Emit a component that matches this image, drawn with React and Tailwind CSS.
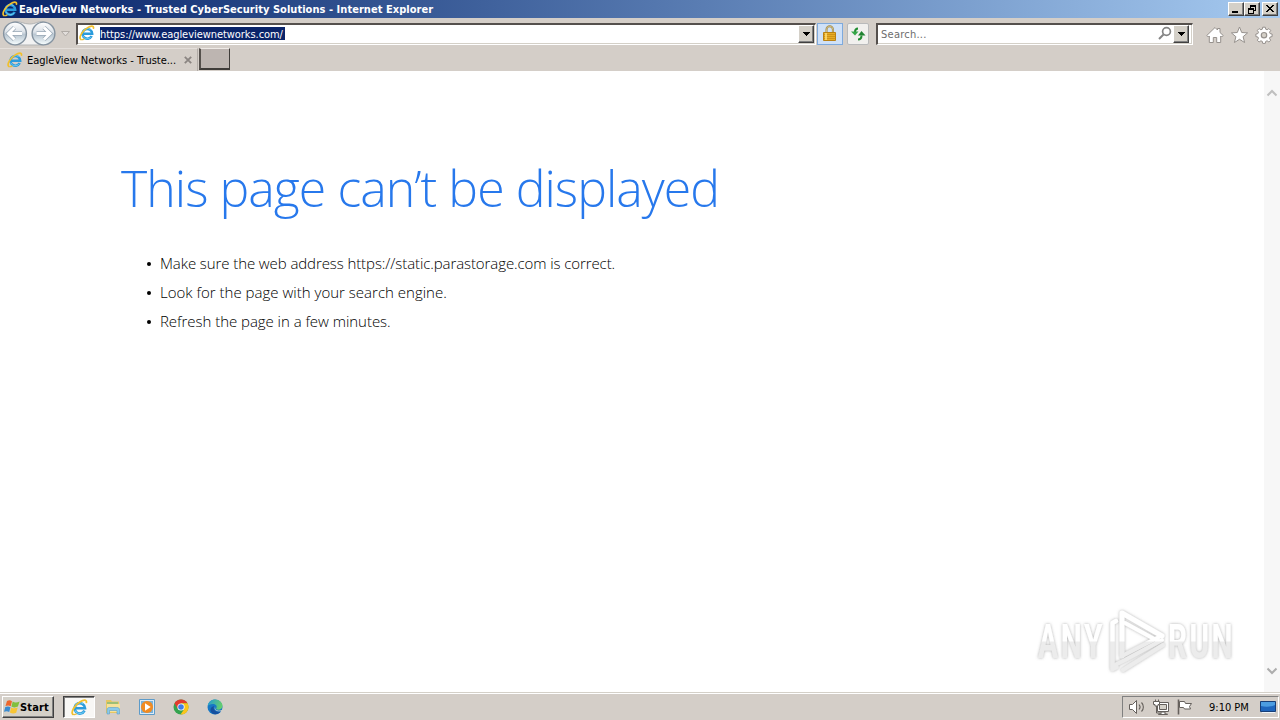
import { useState } from 'react';

// ─── Shared classes ───────────────────────────────────────────────────────────
const TAHOMA = "font-['DejaVu_Sans_Condensed','DejaVu_Sans',sans-serif] [font-stretch:condensed]";
const RAISED = 'border border-t-white border-l-white border-r-[#404040] border-b-[#404040] shadow-[inset_-1px_-1px_0_#808080]';

// ─── Browser logo ─────────────────────────────────────────────────────────────
function IeLogo({ className = '' }) {
    return (
        <svg viewBox="0 0 16 16" className={`shrink-0 ${className}`} fill="none">
            <path d="M12.700 11A4.900 4.900 0 1 1 13.200 8.700H4.500" stroke="#2a9bdc" strokeWidth="2.500" />
            <path d="M12.300 11.800A5 5 0 0 1 3.800 10.800M4.200 6.200A5 5 0 0 1 11.500 4.500" stroke="#6fcdf3" strokeWidth="1" />
            <path d="M1.600 14.300C-.2 12 3.300 6 8.300 2.900 11.800.6 14.800.400 14.500 3.200" stroke="#f2c02c" strokeWidth="1.700" strokeLinecap="round" />
            <path d="M1.800 14.400c.8.600 2.300.2 3.600-.5" stroke="#e8bd3a" strokeWidth="1.200" />
        </svg>
    );
}

// ─── Title bar ────────────────────────────────────────────────────────────────
function CaptionButton({ children, className = '' }) {
    return (
        <button className={`flex h-[14px] w-4 items-center justify-center bg-[#d4d0c8] ${RAISED} ${className}`}>
            <svg viewBox="0 0 12 10" className="h-[10px] w-3" shapeRendering="crispEdges" fill="none" stroke="#000">
                {children}
            </svg>
        </button>
    );
}

function TitleBar() {
    return (
        <div className="flex h-[18px] items-center bg-linear-to-r from-[#0a246a] to-[#a6caf0] pr-[2px] pl-[2px]">
            <IeLogo className="h-4 w-4" />
            <span className={`${TAHOMA} ml-px pt-px text-[11px] leading-[17px] font-bold whitespace-nowrap text-white tracking-[0.04px]`}>
                EagleView Networks - Trusted CyberSecurity Solutions - Internet Explorer
            </span>
            <div className="ml-auto flex">
                <CaptionButton>
                    <path d="M2 8h6" strokeWidth="2" />
                </CaptionButton>
                <CaptionButton className="mr-[2px]">
                    <path d="M4 1h6M4 2h6M4.5 1v3M9.5 1v6M8 6.5h2M2 4h6M2 5h6M2.5 4v6M7.5 4v6M2 9.5h6" />
                </CaptionButton>
                <CaptionButton>
                    <path d="M2 1l7 7M3 1l7 7M9 1L2 8M10 1L3 8" shapeRendering="auto" />
                </CaptionButton>
            </div>
        </div>
    );
}

// ─── Navigation ───────────────────────────────────────────────────────────────
function NavArrows() {
    return (
        <svg viewBox="0 0 72 26" className="h-[26px] w-[72px] shrink-0">
            <defs>
                <linearGradient id="orb" x1="0" y1="0" x2="0" y2="1">
                    <stop offset="0" stopColor="#fff" />
                    <stop offset=".42" stopColor="#dde3e9" />
                    <stop offset=".55" stopColor="#b9c6d1" />
                    <stop offset="1" stopColor="#f8ffff" />
                </linearGradient>
            </defs>
            <path d="M15 1.500C21 1 23 4 29.500 4S38 1 43 1.500a12 12 0 0 1 0 23.500H15A12 12 0 0 1 15 1.500z" fill="#f2f2f2" stroke="#b3b5b6" />
            <circle cx="15" cy="13.500" r="11.400" fill="url(#orb)" stroke="#8593a0" strokeWidth="1.400" />
            <circle cx="43.500" cy="13.500" r="11.400" fill="url(#orb)" stroke="#8593a0" strokeWidth="1.400" />
            <g fill="none" strokeLinejoin="miter">
                <path d="M22 13.500H9M14.500 7.500L8.500 13.500L14.500 19.500" stroke="#9aa9b6" strokeWidth="4.400" />
                <path d="M22 13.500H9M14.500 7.500L8.500 13.500L14.500 19.500" stroke="#fff" strokeWidth="3" />
                <path d="M36.500 13.500H50M44 7.500L50 13.500L44 19.500" stroke="#9aa9b6" strokeWidth="4.400" />
                <path d="M36.500 13.500H50M44 7.500L50 13.500L44 19.500" stroke="#fff" strokeWidth="3" />
            </g>
            <path d="M61.500 11.500h8l-4 4.500z" fill="#e2dedb" stroke="#b0aba6" />
        </svg>
    );
}

function DropButton() {
    return (
        <button className={`flex w-4 shrink-0 items-center justify-center bg-[#d4d0c8] ${RAISED}`}>
            <svg viewBox="0 0 7 4" className="h-1 w-[7px]" shapeRendering="crispEdges">
                <path d="M0 0h7v1H0zM1 1h5v1H1zM2 2h3v1H2zM3 3h1v1H3z" />
            </svg>
        </button>
    );
}

const FIELD = 'flex h-[22px] border-t-2 border-l-2 border-r border-b border-t-[#55504d] border-l-[#55504d] border-r-white border-b-white bg-white shadow-[inset_-1px_-1px_0_#d4d0c8]';

function AddressBar() {
    return (
        <div className={`${FIELD} ml-1 w-[740px] pr-[1px] pb-[1px]`}>
            <IeLogo className="ml-[1px] h-4 w-4" />
            <span className={`${TAHOMA} mt-[2px] ml-[5px] h-[13px] w-[185px] shrink-0 bg-[#0a246a] text-[11px] leading-[15px] whitespace-nowrap text-white tracking-[-0.06px]`}>
                https://www.eagleviewnetworks.com/
            </span>
            <div className="grow" />
            <DropButton />
        </div>
    );
}

function SecurityButtons() {
    return (
        <>
            <button className="ml-px flex h-[22px] w-[26px] items-center justify-center border border-[#7eaadd] bg-[#cfe1f8]">
                <svg viewBox="0 0 16 18" className="h-[18px] w-4">
                    <path d="M4.500 8V4.500a3.200 3.200 0 0 1 6.400 0V8" fill="none" stroke="#9c8648" strokeWidth="2" />
                    <path d="M4.500 8V4.500a3.200 3.200 0 0 1 6.400 0V8" fill="none" stroke="#e5d49b" strokeWidth=".7" />
                    <path d="M1.500 7.500h12v8h-12z" fill="#e9ad25" stroke="#b98114" />
                    <path d="M2 9.500h11M2 11.500h11M2 13.500h11" stroke="#cb9018" strokeWidth=".9" />
                    <path d="M4 8v7" stroke="#ffe27c" strokeWidth="1.500" />
                </svg>
            </button>
            <button className="ml-1 flex h-[22px] w-[22px] items-center justify-center rounded-[2px] border border-[#b9babb] bg-[#f1f0ee]">
                <svg viewBox="0 0 16 14" className="-mt-px h-[14px] w-4" fill="none" stroke="#218d31" strokeWidth="2">
                    <path d="M8 1.500C6 1.500 5 3 5 5" />
                    <path d="M1 4.500h7.500L5 8.500z" fill="#34a647" stroke="none" />
                    <path d="M8 12.500c2.500 0 3.500-1.500 3.500-4" />
                    <path d="M8 8.500h7.500L11.500 4z" fill="#208332" stroke="none" />
                </svg>
            </button>
        </>
    );
}

function SearchBox() {
    return (
        <div className={`${FIELD} ml-[7px] w-[317px] pr-[3px] pb-[1px]`}>
            <span className={`${TAHOMA} ml-[3px] text-[11px] leading-[19px] text-[#6d6d6d] tracking-[0.25px]`}>Search...</span>
            <svg viewBox="0 0 14 14" className="mt-[1px] mr-px ml-auto h-[14px] w-[14px]" fill="none" stroke="#858585">
                <circle cx="8.500" cy="5.500" r="3.900" strokeWidth="1.700" />
                <path d="M5.500 8.500L1 13" strokeWidth="2" />
            </svg>
            <DropButton />
        </div>
    );
}

function CommandIcons() {
    return (
        <svg viewBox="0 0 68 18" className="ml-[13px] h-[18px] w-[68px] shrink-0" fill="#fff" stroke="#96918d" strokeLinejoin="round">
            <path d="M.8 9.500L9 1.500l2.500 2.500V2.500h2.500v4L17.200 9.500l-1.500 1.500-1-1v6.500h-4v-5h-3.400v5h-4V10l-1 1z" />
            <path d="M33.500 1l2.200 5.500 5.900.4-4.500 3.800 1.500 5.800-5.100-3.200-5.100 3.200 1.500-5.800-4.500-3.800 5.900-.4z" />
            <path d="M56.700 1.200h2.600l.4 2 1.400.6 1.800-1.200 1.800 1.800-1.200 1.800.6 1.400 2 .4v2.600l-2 .4-.6 1.400 1.200 1.800-1.800 1.800-1.800-1.200-1.400.6-.4 2h-2.600l-.4-2-1.400-.6-1.800 1.200-1.800-1.800 1.200-1.800-.6-1.400-2-.4V8l2-.4.6-1.400-1.200-1.800 1.800-1.800 1.800 1.200 1.400-.6z" />
            <circle cx="58" cy="9.200" r="2.700" fill="#d4d0c8" strokeWidth="1.200" />
        </svg>
    );
}

function Tab({ title }) {
    return (
        <div className="flex h-[23px] w-[198px] items-center border-t border-r border-t-[#e4dfdb] border-r-[#b2aca7] pl-[7px]">
            <IeLogo className="h-4 w-4" />
            <span className={`${TAHOMA} ml-1 w-[151px] pt-[2px] text-[11px] whitespace-nowrap text-black tracking-[-0.02px]`}>{title}</span>
            <svg viewBox="0 0 8 8" className="ml-[6px] h-2 w-2" fill="none" stroke="#8b8582" strokeWidth="1.800">
                <path d="M.8.800l6.400 6.400M7.200.800L.8 7.200" />
            </svg>
        </div>
    );
}

// ─── Page body ────────────────────────────────────────────────────────────────
const TIPS = [
    'Make sure the web address https://static.parastorage.com is correct.',
    'Look for the page with your search engine.',
    'Refresh the page in a few minutes.',
];

function ErrorPage() {
    return (
        <main className="grow pt-[82px] pl-[120px] font-['Open_Sans',sans-serif] font-light">
            <h1 className="ml-px h-[70px] text-[50px] leading-[70px] whitespace-nowrap text-[#2778ec] tracking-[-0.96px]">
                This page can’t be displayed
            </h1>
            <ul className="mt-[26px]">
                {TIPS.map((tip) => (
                    <li key={tip} className="flex h-[29px] items-center pl-[27px] text-[15px] whitespace-nowrap text-black tracking-[-0.09px] nth-2:tracking-[0.01px] last:tracking-[-0.04px]">
                        <span className="mr-[9px] h-1 w-1 rounded-full bg-black" />
                        {tip}
                    </li>
                ))}
            </ul>
        </main>
    );
}

function ScrollBar() {
    return (
        <div className="flex w-4 flex-col items-center justify-between bg-[#f7f7f7] pt-[18px] pb-[17px]">
            <svg viewBox="0 0 12 8" className="h-2 w-3" fill="none" stroke="#bfbfbf" strokeWidth="2">
                <path d="M1.500 6.500L6 2l4.500 4.500" />
            </svg>
            <svg viewBox="0 0 12 8" className="h-2 w-3" fill="none" stroke="#adadad" strokeWidth="2">
                <path d="M1.500 1.500L6 6l4.500-4.500" />
            </svg>
        </div>
    );
}

function Watermark() {
    return (
        <svg viewBox="0 0 210 76" className="absolute top-[602px] left-[1030px] h-[76px] w-[210px]">
            <defs>
                <linearGradient id="mark" x1="0" y1="0" x2="0" y2="76" gradientUnits="userSpaceOnUse">
                    <stop offset=".51" stopColor="#fff" />
                    <stop offset=".53" stopColor="#ececec" />
                </linearGradient>
                {/* the lettering is drawn from its own baseline, so its split sits above zero */}
                <linearGradient id="letters" x1="0" y1="-56" x2="0" y2="20" gradientUnits="userSpaceOnUse">
                    <stop offset=".51" stopColor="#fff" />
                    <stop offset=".53" stopColor="#ececec" />
                </linearGradient>
                <filter id="soft" x="-10%" y="-20%" width="120%" height="140%">
                    <feDropShadow dx="0" dy="0" stdDeviation="1.800" floodColor="#777" floodOpacity=".6" />
                </filter>
            </defs>
            <g filter="url(#soft)">
                <g transform="translate(8 56) scale(.62 1)" fill="url(#letters)" className="font-['Roboto',sans-serif] text-[48px] font-bold">
                    <text textLength="104">ANY</text>
                </g>
                <g transform="translate(138 56) scale(.62 1)" fill="url(#letters)" className="font-['Roboto',sans-serif] text-[48px] font-bold">
                    <text textLength="104">RUN</text>
                </g>
                <g fill="none" stroke="url(#mark)" strokeWidth="5" strokeLinecap="round" strokeLinejoin="round">
                    <path d="M92 54V11l40 23" />
                    <path d="M86 19L82.500 21V67l4-2" strokeWidth="4.500" />
                    <path d="M92 54L129 35M85 63l10-5 37-20M93 68l40-25M95 21l33 18" strokeWidth="4" />
                </g>
            </g>
        </svg>
    );
}

// ─── Taskbar ──────────────────────────────────────────────────────────────────
function WindowsFlag() {
    return (
        <svg viewBox="0 0 16 16" className="h-4 w-4">
            <path d="M3 2c2-1 3.500-.8 5 .2L6.700 7.200C5 6.200 3.500 6.200 1.500 7z" fill="#ee672c" />
            <path d="M8.700 2.600c2 1.300 4.300 1 6.900 0l-1.700 5c-2 1-4.400 1.100-6.500-.1z" fill="#81bf3d" />
            <path d="M1.300 8c2-.9 3.700-.8 5.200.2L5.200 13C3.500 12 2 12 0 12.800z" fill="#3b8bd0" />
            <path d="M7.200 8.500c2 1.200 4.300 1 6.500 0L12.200 13.700c-2 1-4.200 1-6.300-.2z" fill="#f8c535" />
        </svg>
    );
}

function ExplorerIcon() {
    return (
        <svg viewBox="0 0 16 16" className="h-4 w-4">
            <path d="M1 1h5l1 1.500h7V14H1z" fill="#e6c762" />
            <path d="M2 3h11v2H2z" fill="#9ebf75" />
            <path d="M2 5h13v8H2z" fill="#f6e29a" />
            <path d="M2 15v-4c0-2 1-2.500 2.500-2.500h7c2 0 3 .5 3 2.500v4H12v-3.500H4.500V15z" fill="#8acaea" stroke="#5b9fc9" strokeWidth=".6" />
        </svg>
    );
}

function PlayerIcon() {
    return (
        <svg viewBox="0 0 16 16" className="h-4 w-4">
            <path d="M.5.500h15v15H.500z" fill="#dcebf7" stroke="#5d9bc9" />
            <path d="M2 2h12v12H2z" fill="#78b2db" />
            <circle cx="8" cy="8" r="6" fill="#f18b22" />
            <path d="M6 4.200L11.700 8 6 11.800z" fill="#fff" />
        </svg>
    );
}

function ChromeIcon() {
    return (
        <svg viewBox="0 0 16 16" className="h-4 w-4">
            <circle cx="8" cy="8" r="7.500" fill="#34a34f" />
            <path d="M1.500 4.250A7.500 7.500 0 0 1 14.500 4.250H8L4.700 9.800z" fill="#e33b2e" />
            <path d="M14.500 4.250A7.500 7.500 0 0 1 7.500 15.500L11.300 9.900 8 4.250z" fill="#fbc51b" />
            <circle cx="8" cy="8" r="3.600" fill="#fff" />
            <circle cx="8" cy="8" r="2.800" fill="#3f7de8" />
        </svg>
    );
}

function EdgeIcon() {
    return (
        <svg viewBox="0 0 16 16" className="h-4 w-4">
            <defs>
                <linearGradient id="edgeTop" x1="0" y1="0" x2="1" y2=".3">
                    <stop stopColor="#2299d7" />
                    <stop offset="1" stopColor="#63cc71" />
                </linearGradient>
            </defs>
            <circle cx="8" cy="8" r="7.500" fill="#1777c5" />
            <path d="M.7 7C1.200 3 4.300.500 8 .5c4.500 0 7.500 3.200 7.500 6.200 0 2.600-2 4-4.300 4-2.200 0-2.500-1-1.800-1.700C10.500 7 8.500 5 5.800 5 3.300 5 1.500 6 .7 7z" fill="url(#edgeTop)" />
            <path d="M7 7c-1.500 3.500 1.500 7 6.500 5.500-2 3-6 3.700-8.500 1.500C2.500 12 3 8 7 7z" fill="#164f9f" />
            <path d="M8.300 7.500c-1 2.500 1.200 4.800 5.200 4l2.500-1-1 2-2-.2C9 12.500 6.500 10.500 8.300 7.500z" fill="#d4d0c8" />
        </svg>
    );
}

function Tray() {
    return (
        <div className="mr-[1px] flex h-[22px] w-[157px] items-center border border-t-[#808080] border-l-[#808080] border-r-white border-b-white">
            <svg viewBox="0 0 70 18" className="ml-[5px] h-[18px] w-[70px] shrink-0" fill="#fff" stroke="#65605c">
                <path d="M1.500 6.500h3l4-4v13l-4-4h-3z" />
                <path d="M11 6.500c1.300 1.500 1.300 3.500 0 5M13.500 4.500c2.500 2.500 2.500 6.500 0 9" fill="none" strokeWidth="1.100" />
                <path d="M29.500 4.500h11v9h-11z" />
                <path d="M31.500 6.500h7v5h-7z" fill="#d4d0c8" />
                <path d="M33 14h4v2h2.500v.500h-9V16H33z" />
                <path d="M27.500 4.500v-3M30.500 4.500v-3M28.500 7.500v7.500h4" fill="none" />
                <path d="M25.500 3.500h6v3h-1.500v1.500h-3V6.500h-1.500z" />
                <path d="M50.500 1.500v15" strokeWidth="1.600" />
                <path d="M51.500 3.500h5l1 2h6l-2 3 1 2.500h-6l-1-1.500h-4z" />
            </svg>
            <span className={`${TAHOMA} ml-[11px] w-[41px] pt-px text-[11px] leading-[20px] whitespace-nowrap text-black tracking-[0]`}>9:10 PM</span>
            <svg viewBox="0 0 16 14" className="ml-[10px] h-[14px] w-4">
                <path d="M.5 1.500h15v10H.500z" fill="#1f66bd" stroke="#173e77" />
                <path d="M1 2h14v3Q8 8 1 6z" fill="#4c9de1" />
                <path d="M2 12.500h13" stroke="#eef4f9" />
            </svg>
        </div>
    );
}

function Taskbar() {
    return (
        <footer className="flex h-[28px] items-center border-t border-[#d4d0c8] bg-[#d4cec8] pt-px pl-[2px] shadow-[inset_0_1px_0_#fff]">
            <button className={`flex h-[22px] w-[52px] items-center pl-px bg-[#d4d0c8] ${RAISED}`}>
                <WindowsFlag />
                <span className={`${TAHOMA} pt-[2px] text-[11px] font-bold text-black tracking-[0.15px]`}>Start</span>
            </button>
            <button className="ml-[9px] flex h-[22px] w-8 items-center justify-center border border-t-[#404040] border-l-[#404040] border-r-white border-b-white bg-[#f8f7f5] shadow-[inset_1px_1px_0_#808080]">
                <IeLogo className="h-[17px] w-[17px]" />
            </button>
            <div className="ml-[10px] flex gap-[18px]">
                <ExplorerIcon />
                <PlayerIcon />
                <ChromeIcon />
                <EdgeIcon />
            </div>
            <div className="grow" />
            <Tray />
        </footer>
    );
}

export default function App() {
    const [title] = useState('EagleView Networks - Truste...');

    return (
        <div className="relative flex h-[720px] w-[1280px] flex-col overflow-hidden bg-white">
            <TitleBar />
            <header className="h-[53px] bg-[#d4cec8]">
                <div className="flex h-[30px] items-start pt-[4px]">
                    <div className="-mt-[2px]">
                        <NavArrows />
                    </div>
                    <div className="flex pt-px">
                        <AddressBar />
                        <SecurityButtons />
                        <SearchBox />
                        <div className="pt-[3px]">
                            <CommandIcons />
                        </div>
                    </div>
                </div>
                <div className="flex">
                    <Tab title={title} />
                    <button className="ml-px h-[22px] w-[31px] border-t border-r border-b-2 border-l-2 border-t-[#eeeae6] border-l-[#55504c] border-r-[#3f3c39] border-b-[#3f3c39] bg-[#bdb5b1]" />
                </div>
            </header>
            <div className="flex grow">
                <ErrorPage />
                <ScrollBar />
            </div>
            <Taskbar />
            <Watermark />
        </div>
    );
}
